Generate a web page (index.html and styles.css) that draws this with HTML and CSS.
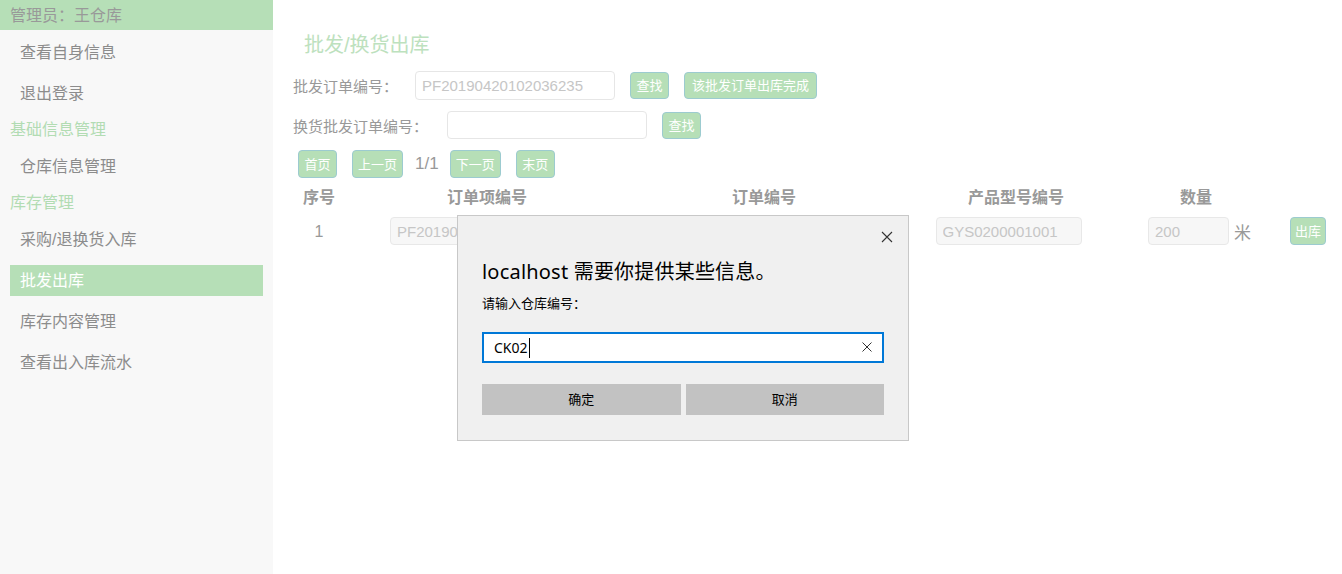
FILE: index.html
```html
<!DOCTYPE html>
<html lang="zh-CN">
<head>
<meta charset="utf-8">
<title>批发/换货出库</title>
<link rel="stylesheet" href="styles.css">
</head>
<body>
<div class="app">
  <aside class="sidebar">
    <div class="admin">管理员：王仓库</div>
    <nav class="menu">
      <div class="item">查看自身信息</div>
      <div class="item">退出登录</div>
      <div class="cat">基础信息管理</div>
      <div class="item">仓库信息管理</div>
      <div class="cat">库存管理</div>
      <div class="item">采购/退换货入库</div>
      <div class="item active">批发出库</div>
      <div class="item">库存内容管理</div>
      <div class="item">查看出入库流水</div>
    </nav>
  </aside>
  <main class="main">
    <h1 class="title">批发/换货出库</h1>
    <div class="form-row r1">
      <span class="label">批发订单编号：</span>
      <input class="field" type="text" placeholder="PF20190420102036235">
      <button class="btn">查找</button>
      <button class="btn wide">该批发订单出库完成</button>
    </div>
    <div class="form-row r2">
      <span class="label">换货批发订单编号：</span>
      <input class="field" type="text">
      <button class="btn">查找</button>
    </div>
    <div class="pager">
      <button class="btn pbtn">首页</button>
      <button class="btn pbtn">上一页</button>
      <span class="pnum">1/1</span>
      <button class="btn pbtn">下一页</button>
      <button class="btn pbtn">末页</button>
    </div>
    <div class="grid">
      <div class="th">序号</div>
      <div class="th">订单项编号</div>
      <div class="th">订单编号</div>
      <div class="th">产品型号编号</div>
      <div class="th">数量</div>
      <div class="th"></div>

      <div class="td num">1</div>
      <div class="td"><input class="cell-in w194" type="text" value="PF20190420102036235001" disabled></div>
      <div class="td"><input class="cell-in w194" type="text" value="PF20190420102036235" disabled></div>
      <div class="td prod"><input class="cell-in w146" type="text" value="GYS0200001001" disabled></div>
      <div class="td qty"><input class="cell-in w81" type="text" value="200" disabled><span class="unit">米</span></div>
      <div class="td act"><button class="btn sbtn">出库</button></div>
    </div>
  </main>
</div>

<div class="dialog">
  <div class="dlg-close">
    <svg width="12" height="12" viewBox="0 0 12 12"><path d="M1 1 L11 11 M11 1 L1 11" stroke="#333" stroke-width="1.1" fill="none"/></svg>
  </div>
  <div class="dlg-title">localhost 需要你提供某些信息。</div>
  <div class="dlg-label">请输入仓库编号：</div>
  <div class="dlg-input">
    <span class="dlg-text">CK02</span><span class="caret"></span>
    <span class="dlg-clear">
      <svg width="10" height="10" viewBox="0 0 10 10"><path d="M0.5 0.5 L9.5 9.5 M9.5 0.5 L0.5 9.5" stroke="#333" stroke-width="1" fill="none"/></svg>
    </span>
  </div>
  <div class="dlg-buttons">
    <div class="dlg-btn">确定</div>
    <div class="dlg-btn">取消</div>
  </div>
</div>
</body>
</html>
```

FILE: styles.css
```css
* { box-sizing: border-box; }
html, body { margin: 0; padding: 0; height: 100%; }
body {
  font-family: "Liberation Sans", "Noto Sans CJK SC", sans-serif;
  background: #ffffff;
  color: #888;
  overflow: hidden;
}
.app { display: flex; height: 574px; }

.sidebar {
  width: 273px;
  flex: none;
  background: #f8f8f8;
  height: 100%;
}
.admin {
  height: 30px;
  background: #b6dfb7;
  color: #999;
  font-size: 16px;
  line-height: 31px;
  padding-left: 10px;
}
.menu { padding-top: 7px; display: flex; flex-direction: column; gap: 10px; }
.item {
  height: 31px;
  line-height: 31px;
  margin: 0 10px;
  padding-left: 10px;
  font-size: 16px;
  color: #8c8c8c;
}
.item.active { background: #b6dfb7; color: #fff; }
.cat {
  height: 22px;
  line-height: 22px;
  padding-left: 10px;
  font-size: 16px;
  color: #b2dcb3;
}

.main { flex: 1; padding-left: 20px; position: relative; }
.title {
  margin: 0;
  padding: 32px 0 0 11px;
  height: 71px;
  font-size: 20px;
  font-weight: normal;
  line-height: 26px;
  color: #bde1be;
}
.form-row { display: flex; align-items: center; height: 29px; }
.r2 { margin-top: 11px; height: 28px; }
.label { font-size: 15px; color: #999; }
.r1 .label { width: 122px; }
.r2 .label { width: 154px; }
.field {
  width: 200px;
  height: 29px;
  border: 1px solid #e6e6e6;
  border-radius: 4px;
  padding: 0 6px;
  font-family: "Liberation Sans", "Noto Sans CJK SC", sans-serif;
  font-size: 15px;
  color: #555;
  background: #fff;
  margin-right: 15px;
  outline: none;
}
.r2 .field { height: 28px; }
.field::placeholder { color: #c6c6c6; }
.btn {
  height: 27px;
  min-width: 39px;
  padding: 0 5px;
  border: 1px solid #9ccbd0;
  border-radius: 4px;
  background: #b6dfb7;
  color: #fff;
  font-family: "Liberation Sans", "Noto Sans CJK SC", sans-serif;
  font-size: 13px;
  line-height: 25px;
  margin-right: 15px;
  cursor: pointer;
}
.btn.wide { padding: 0 7px; }
.pager { display: flex; align-items: center; margin-top: 11px; padding-left: 5px; height: 28px; }
.pbtn { height: 28px; }
.pnum { font-size: 17px; color: #999; margin-right: 11px; margin-left: -3px; }

.grid {
  display: grid;
  grid-template-columns: 52px 284px 270px 234px 126px 83px;
  margin-top: 8px;
}
.th {
  height: 24px;
  line-height: 24px;
  text-align: center;
  font-weight: bold;
  font-size: 16px;
  color: #999;
}
.td {
  margin-top: 7px;
  height: 28px;
  display: flex;
  align-items: center;
  justify-content: center;
  font-size: 15px;
}
.num { color: #999; font-size: 16px; padding-top: 2px; }
.prod { padding-right: 15px; }
.qty { padding-left: 8px; }
.act { justify-content: flex-start; padding-left: 31px; }
.cell-in {
  height: 28px;
  border: 1px solid #e8e8e8;
  border-radius: 4px;
  background: #f7f7f7;
  padding: 0 6px;
  font-family: "Liberation Sans", "Noto Sans CJK SC", sans-serif;
  font-size: 15px;
  color: #c6c6c6;
}
.w194 { width: 194px; }
.w146 { width: 146px; }
.w81 { width: 81px; }
.unit { margin-left: 5px; width: 18px; color: #999; font-size: 17px; }
.sbtn { height: 28px; margin: 0; padding: 0 4px; min-width: 0; }

.dialog {
  position: absolute;
  left: 457px;
  top: 215px;
  width: 452px;
  height: 226px;
  background: #f0f0f0;
  border: 1px solid #c8c8c8;
  padding: 0 24px;
  font-family: "Noto Sans", "Noto Sans CJK SC", sans-serif;
  color: #000;
}
.dlg-close { position: absolute; right: 15px; top: 15px; width: 12px; height: 12px; display: flex; }
.dlg-title {
  margin-top: 42px;
  font-size: 20px;
  line-height: 28px;
  letter-spacing: 0.2px;
}
.dlg-label { margin-top: 7px; font-size: 13px; line-height: 20px; }
.dlg-input {
  margin-top: 19px;
  height: 31px;
  background: #fff;
  border: 2px solid #0078d7;
  display: flex;
  align-items: center;
  padding-left: 10px;
  position: relative;
}
.dlg-text { font-size: 14px; line-height: 18px; }
.caret { width: 1px; height: 20px; background: #000; margin-left: 1px; }
.dlg-clear { position: absolute; right: 10px; top: 8px; display: flex; }
.dlg-buttons { display: flex; gap: 5px; margin-top: 21px; }
.dlg-btn {
  flex: 1;
  height: 31px;
  line-height: 31px;
  text-align: center;
  background: #c2c2c2;
  font-size: 13px;
}
```
